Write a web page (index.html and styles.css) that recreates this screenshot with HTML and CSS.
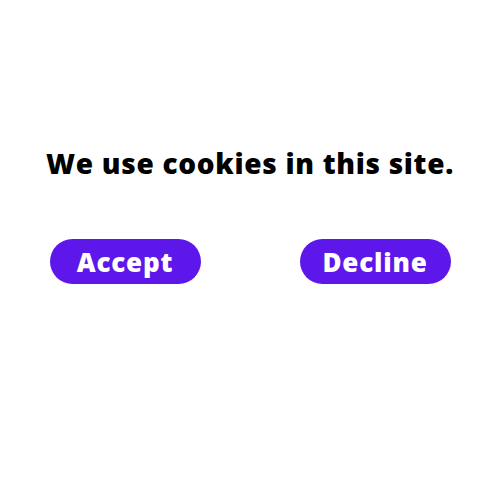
FILE: index.html
```html
<!DOCTYPE html>
<html>
<head>
<meta charset="utf-8">
<link rel="stylesheet" href="styles.css">
</head>
<body>
<main class="page">
  <h1 class="title">We use cookies in this site.</h1>
  <div class="actions">
    <div class="cell"><button class="btn">Accept</button></div>
    <div class="cell"><button class="btn">Decline</button></div>
  </div>
</main>
</body>
</html>
```
FILE: styles.css
```css
html, body {
  margin: 0;
  padding: 0;
  background: #ffffff;
}
.page {
  width: 500px;
  height: 500px;
  display: flex;
  flex-direction: column;
  align-items: center;
  font-family: "Open Sans", "Lato", sans-serif;
}
.title {
  margin: 145px 0 0 0;
  font-size: 28px;
  font-weight: 800;
  line-height: 36px;
  letter-spacing: 0.7px;
  color: #000000;
  text-align: center;
}
.actions {
  margin-top: 58px;
  width: 500px;
  display: grid;
  grid-template-columns: 1fr 1fr;
}
.cell {
  display: flex;
  justify-content: center;
}
.btn {
  width: 151px;
  height: 45px;
  border: none;
  border-radius: 23px;
  background: #5e17eb;
  color: #ffffff;
  font-family: "Open Sans", "Lato", sans-serif;
  font-weight: 800;
  font-size: 26px;
  letter-spacing: 0.8px;
  padding: 0;
}
```
